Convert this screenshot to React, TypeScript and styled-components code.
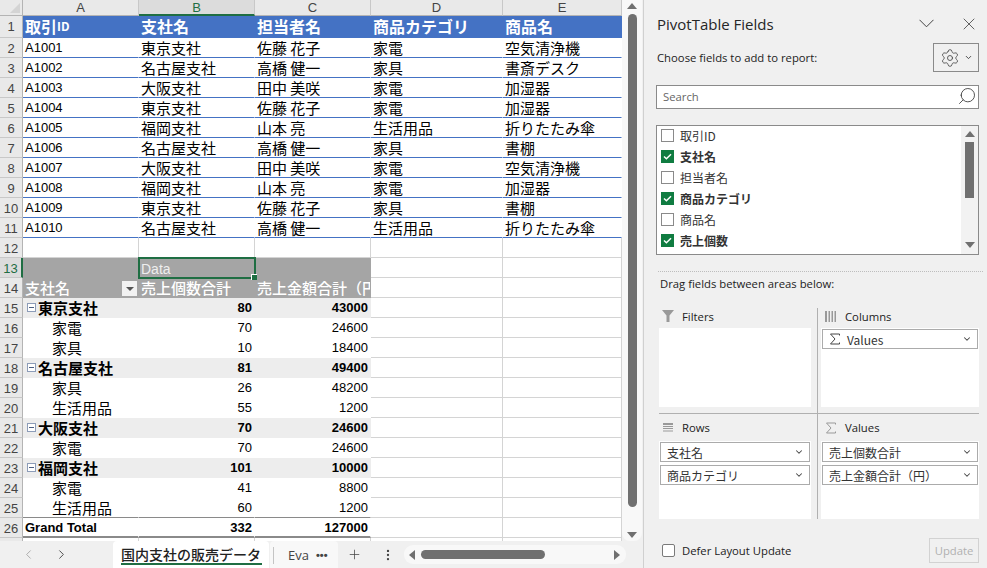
import React from "react";
import styled, { createGlobalStyle } from "styled-components";
import { ChevronDown, ChevronLeft, ChevronRight, MoreVertical, Plus, Search, Settings, X } from "lucide-react";

const CJK = `"Noto Sans CJK JP", "Liberation Sans", sans-serif`;
const LATIN = `"Liberation Sans", "Noto Sans CJK JP", sans-serif`;
const UI = `"Open Sans", "Noto Sans CJK JP", sans-serif`;

const GlobalStyle = createGlobalStyle`
  html, body {
    margin: 0;
    padding: 0;
    width: 987px;
    height: 568px;
    overflow: hidden;
    background: #f0f0f0;
  }
  * { box-sizing: border-box; }
`;

const Window = styled.div`
  display: flex;
  width: 987px;
  height: 568px;
  background: #f0f0f0;
`;

const Book = styled.div`
  width: 643px;
  display: flex;
  flex-direction: column;
`;

const SheetArea = styled.div`
  display: flex;
  height: 541px;
`;

const Grid = styled.div`
  width: 622px;
  height: 541px;
  overflow: hidden;
  background: #fff;
`;

const SheetRow = styled.div<{ $h?: number }>`
  display: grid;
  grid-template-columns: 23px 116px 116px 116px 132px 119px;
  grid-template-rows: 100%;
  height: ${({ $h }) => $h || 20}px;
`;

const Corner = styled.div`
  background: #e9e9e9;
  border-right: 1px solid #b4b4b4;
  border-bottom: 1px solid #b4b4b4;
  position: relative;
  &::after {
    content: "";
    position: absolute;
    right: 2px;
    bottom: 2px;
    border-style: solid;
    border-width: 0 0 10px 10px;
    border-color: transparent transparent #d4d4d4 transparent;
  }
`;

const ColHead = styled.div<{ $active?: boolean }>`
  background: ${({ $active }) => ($active ? "#dcdcdc" : "#e9e9e9")};
  color: ${({ $active }) => ($active ? "#1f6e43" : "#444")};
  border-right: 1px solid #c8c8c8;
  border-bottom: ${({ $active }) => ($active ? "2px solid #1f6e43" : "1px solid #b4b4b4")};
  font: 13px/15px ${LATIN};
  text-align: center;
`;

const RowHead = styled.div<{ $active?: boolean }>`
  background: ${({ $active }) => ($active ? "#dcdcdc" : "#e9e9e9")};
  color: ${({ $active }) => ($active ? "#1f6e43" : "#444")};
  border-right: ${({ $active }) => ($active ? "2px solid #1f6e43" : "1px solid #b4b4b4")};
  border-bottom: 1px solid #c8c8c8;
  font: 13px/18px ${LATIN};
  text-align: center;
  padding-top: 2px;
`;

const Cell = styled.div<{ $line?: string; $grid?: boolean; $bg?: string; $latin?: boolean; $bold?: boolean; $right?: boolean; $indent?: number; $thick?: boolean }>`
  position: relative;
  height: 100%;
  min-width: 0;
  overflow: hidden;
  white-space: nowrap;
  display: flex;
  align-items: center;
  justify-content: ${({ $right }) => ($right ? "flex-end" : "flex-start")};
  padding: ${({ $latin, $thick }) => ($latin ? ($thick ? 2 : 1) : 0)}px 2px 0 ${({ $indent }) => $indent || 2}px;
  background: ${({ $bg }) => $bg || "#fff"};
  color: #000;
  border-right: 1px solid ${({ $grid }) => ($grid ? "#d4d4d4" : "transparent")};
  border-bottom: ${({ $thick }) => ($thick ? 2 : 1)}px solid ${({ $line, $grid }) => $line || ($grid ? "#d4d4d4" : "transparent")};
  font-family: ${({ $latin }) => ($latin ? LATIN : CJK)};
  font-size: ${({ $latin }) => ($latin ? 13 : 15)}px;
  line-height: 18px;
  font-weight: ${({ $bold }) => ($bold ? 700 : 400)};
`;

const BlueHead = styled(Cell)`
  overflow: visible;
  background: #4472c4;
  color: #fff;
  font-size: 16px;
  font-weight: 700;
  padding-bottom: 2px;
  border-bottom-color: #4472c4;
  small {
    font-size: 12px;
  }
`;

const PivotHead = styled(Cell)`
  background: #a5a5a5;
  color: #fff;
  font-weight: 500;
`;

const Selected = styled(PivotHead)`
  overflow: visible;
  outline: 2px solid #1f6e43;
  outline-offset: -1px;
  box-shadow: inset 0 0 0 1px #fff;
  border: none;
  padding-top: 2px;
  font-size: 14px;
  font-weight: 400;
  color: #eee;
  font-family: ${LATIN};
  z-index: 1;
`;

const Handle = styled.span`
  position: absolute;
  right: -2px;
  bottom: -2px;
  width: 6px;
  height: 6px;
  background: #1f6e43;
  border-left: 1px solid #fff;
  border-top: 1px solid #fff;
`;

const FilterButton = styled.span`
  position: absolute;
  right: 1px;
  bottom: 1px;
  width: 15px;
  height: 15px;
  background: #f2f2f2;
  display: flex;
  align-items: center;
  justify-content: center;
  &::after {
    content: "";
    border-style: solid;
    border-width: 4px 4px 0 4px;
    border-color: #555 transparent transparent transparent;
  }
`;

const Minus = styled.span`
  width: 9px;
  height: 9px;
  margin-right: 2px;
  border: 1px solid #8c9cb8;
  background: #fff;
  display: flex;
  align-items: center;
  justify-content: center;
  &::after {
    content: "";
    width: 5px;
    height: 1px;
    background: #4a5d80;
  }
`;

const VScroll = styled.div`
  width: 20px;
  height: 541px;
  display: flex;
  flex-direction: column;
  align-items: center;
  background: #f8f8f8;
  border-radius: 0 0 8px 8px;
`;

const VThumb = styled.div`
  width: 9px;
  height: 493px;
  margin: 3px 0 auto;
  background: #707070;
  border-radius: 5px;
`;

const Arrow = styled.span<{ $dir: "up" | "down" | "left" | "right"; $color?: string }>`
  width: 0;
  height: 0;
  flex: none;
  border-style: solid;
  border-color: transparent;
  border-width: ${({ $dir }) =>
    $dir === "up" ? "0 5px 6px 5px" : $dir === "down" ? "6px 5px 0 5px" : $dir === "left" ? "5px 6px 5px 0" : "5px 0 5px 6px"};
  ${({ $dir, $color }) => {
    const c = $color || "#707070";
    return $dir === "up"
      ? `border-bottom-color: ${c};`
      : $dir === "down"
      ? `border-top-color: ${c};`
      : $dir === "left"
      ? `border-right-color: ${c};`
      : `border-left-color: ${c};`;
  }}
`;

const UpArrow = styled(Arrow)`
  margin-top: 3px;
  margin-bottom: 2px;
`;

const DownArrow = styled(Arrow)`
  margin-bottom: 3px;
`;

const ListUpArrow = styled(Arrow)`
  margin-top: 5px;
  margin-bottom: 2px;
`;

const ListDownArrow = styled(Arrow)`
  margin-bottom: 6px;
`;

const TabBar = styled.div`
  height: 27px;
  display: flex;
  align-items: center;
  background: #f0f0f0;
`;

const NavButton = styled.span<{ $dim?: boolean }>`
  width: 33px;
  display: flex;
  justify-content: center;
  color: ${({ $dim }) => ($dim ? "#a8a8a8" : "#444")};
`;

const Nav = styled.div`
  display: flex;
  width: 113px;
  padding-left: 12px;
`;

const ActiveTab = styled.div`
  width: 156px;
  height: 27px;
  padding: 4px 8px 0;
  background: #fff;
  border-radius: 4px 4px 0 0;
  font: 500 14px/19px ${CJK};
  color: #222;
  white-space: nowrap;
  position: relative;
  &::after {
    content: "";
    position: absolute;
    left: 8px;
    right: 7px;
    bottom: 3px;
    height: 2px;
    background: #1f6e43;
  }
`;

const OtherTab = styled.div`
  width: 68px;
  height: 27px;
  margin-left: 1px;
  padding-left: 18px;
  display: flex;
  align-items: center;
  background: #f8f8f8;
  border-radius: 4px 4px 0 0;
  font: 13px ${UI};
  color: #444;
  position: relative;
  &::before {
    content: "";
    position: absolute;
    left: 3px;
    top: 6px;
    bottom: 4px;
    width: 1px;
    background: #c4c4c4;
  }
  b {
    margin-left: 7px;
    font: 700 11px/8px ${LATIN};
  }
`;

const TabTool = styled.span`
  width: 33px;
  display: flex;
  justify-content: center;
  color: #444;
`;

const HScroll = styled.div`
  width: 222px;
  height: 19px;
  padding: 0 6px 0 5px;
  display: flex;
  align-items: center;
  background: #f8f8f8;
  border-radius: 9px;
`;

const HThumb = styled.div`
  width: 124px;
  height: 9px;
  margin: 0 auto 0 6px;
  background: #707070;
  border-radius: 5px;
`;

const Panel = styled.aside`
  width: 344px;
  height: 568px;
  border-left: 1px solid #d0d0d0;
  padding: 0 8px 0 12px;
  background: #f0f0f0;
  font-family: ${UI};
  color: #222;
  display: flex;
  flex-direction: column;
`;

const TitleBar = styled.div`
  height: 43px;
  padding: 4px 0 0 1px;
  display: flex;
  align-items: center;
  h1 {
    flex: 1;
    margin: 0;
    font-size: 15px;
    font-weight: 400;
    color: #262626;
  }
`;

const TitleIcon = styled.span<{ $gap?: number }>`
  display: flex;
  margin-right: ${({ $gap }) => $gap || 0}px;
  color: #444;
`;

const ChooseRow = styled.div`
  height: 29px;
  padding-left: 1px;
  display: flex;
  align-items: center;
  justify-content: space-between;
  font-size: 11.3px;
`;

const GearButton = styled.div`
  width: 46px;
  height: 29px;
  border: 1px solid #8a8a8a;
  background: #f0f0f0;
  display: flex;
  align-items: center;
  justify-content: center;
  gap: 4px;
  color: #444;
`;

const SearchBox = styled.div`
  height: 24px;
  margin-top: 13px;
  padding: 0 1px 2px 6px;
  border: 1px solid #8a8a8a;
  background: #fff;
  display: flex;
  align-items: center;
  justify-content: space-between;
  font-size: 11.3px;
  color: #666;
`;

const FieldList = styled.div`
  height: 130px;
  margin-top: 16px;
  border: 1px solid #8a8a8a;
  background: #fff;
  display: flex;
`;

const FieldRows = styled.div`
  flex: 1;
`;

const FieldRow = styled.div<{ $on?: boolean }>`
  height: 21px;
  padding: 0 0 2px 4px;
  display: flex;
  align-items: center;
  gap: 6px;
  font: ${({ $on }) => ($on ? 700 : 400)} 12px ${CJK};
  color: #333;
`;

const Box = styled.span<{ $on?: boolean }>`
  width: 13px;
  height: 13px;
  border: 1px solid ${({ $on }) => ($on ? "#107c41" : "#8a8a8a")};
  background: ${({ $on }) => ($on ? "#107c41" : "#fff")};
  display: flex;
  align-items: center;
  justify-content: center;
`;

const ListScroll = styled.div`
  width: 17px;
  background: #f2f2f2;
  display: flex;
  flex-direction: column;
  align-items: center;
`;

const ListThumb = styled.div`
  width: 9px;
  height: 56px;
  margin: 3px 0 auto;
  background: #707070;
`;

const DottedLine = styled.div`
  height: 1px;
  margin: 16px -4px 0 2px;
  border-top: 1px dotted #bdbdbd;
`;

const DragLabel = styled.div`
  margin: 4px 0 0 4px;
  font-size: 11.3px;
  line-height: 16px;
`;

const Areas = styled.div`
  margin: 16px 0 0 3px;
  width: 320px;
  display: grid;
  grid-template-columns: 159px 161px;
  grid-template-rows: 106px 105px;
`;

const Area = styled.div<{ $top?: boolean; $left?: boolean }>`
  display: flex;
  flex-direction: column;
  padding-left: ${({ $left }) => ($left ? 0 : 3)}px;
  padding-right: ${({ $left }) => ($left ? 6 : 0)}px;
  border-right: ${({ $left }) => ($left ? "1px solid #b0b0b0" : "none")};
  border-bottom: ${({ $top }) => ($top ? "1px solid #b0b0b0" : "none")};
  padding-bottom: ${({ $top }) => ($top ? 6 : 0)}px;
`;

const AreaHead = styled.div<{ $top?: boolean; $inset?: number }>`
  height: ${({ $top }) => ($top ? 20 : 27)}px;
  padding: 0 0 ${({ $top }) => ($top ? 4 : 0)}px ${({ $inset }) => $inset || 3}px;
  display: flex;
  align-items: center;
  gap: 8px;
  font-size: 11.3px;
  svg {
    flex: none;
  }
`;

const AreaBody = styled.div`
  flex: 1;
  background: #fff;
  padding: 1px 1px 0;
  display: flex;
  flex-direction: column;
  gap: 3px;
`;

const Chip = styled.div`
  height: 20px;
  padding: 0 5px 0 6px;
  border: 1px solid #ababab;
  background: #fff;
  display: flex;
  align-items: center;
  justify-content: space-between;
  font: 12px ${CJK};
  color: #333;
  span {
    display: flex;
    align-items: center;
    gap: 6px;
  }
`;

const Footer = styled.div`
  margin: 19px 0 0 6px;
  display: flex;
  align-items: center;
  font-size: 11.3px;
`;

const DeferBox = styled.span`
  width: 13px;
  height: 13px;
  margin-right: 7px;
  border: 1px solid #7a7a7a;
  border-radius: 2px;
  background: #fff;
`;

const UpdateButton = styled.div`
  width: 50px;
  height: 25px;
  margin-left: auto;
  border: 1px solid #d2d2d2;
  color: #b0b0b0;
  display: flex;
  align-items: center;
  justify-content: center;
`;

const MirroredSearch = styled(Search)`
  transform: scaleX(-1);
`;

const tableRows = [
  ["A1001", "東京支社", "佐藤 花子", "家電", "空気清浄機"],
  ["A1002", "名古屋支社", "高橋 健一", "家具", "書斎デスク"],
  ["A1003", "大阪支社", "田中 美咲", "家電", "加湿器"],
  ["A1004", "東京支社", "佐藤 花子", "家電", "加湿器"],
  ["A1005", "福岡支社", "山本 亮", "生活用品", "折りたたみ傘"],
  ["A1006", "名古屋支社", "高橋 健一", "家具", "書棚"],
  ["A1007", "大阪支社", "田中 美咲", "家電", "空気清浄機"],
  ["A1008", "福岡支社", "山本 亮", "家電", "加湿器"],
  ["A1009", "東京支社", "佐藤 花子", "家具", "書棚"],
  ["A1010", "名古屋支社", "高橋 健一", "生活用品", "折りたたみ傘"],
];

const pivotRows: [string, number, number, boolean][] = [
  ["東京支社", 80, 43000, true],
  ["家電", 70, 24600, false],
  ["家具", 10, 18400, false],
  ["名古屋支社", 81, 49400, true],
  ["家具", 26, 48200, false],
  ["生活用品", 55, 1200, false],
  ["大阪支社", 70, 24600, true],
  ["家電", 70, 24600, false],
  ["福岡支社", 101, 10000, true],
  ["家電", 41, 8800, false],
  ["生活用品", 60, 1200, false],
];

const fields: [string, boolean][] = [
  ["取引ID", false],
  ["支社名", true],
  ["担当者名", false],
  ["商品カテゴリ", true],
  ["商品名", false],
  ["売上個数", true],
];

const Blank = () => (
  <>
    <Cell $grid />
    <Cell $grid />
  </>
);

const Check = () => (
  <svg width="9" height="7" viewBox="0 0 9 7" fill="none">
    <path d="M1 3.5 L3.4 5.8 L8 1.2" stroke="#fff" strokeWidth="1.5" />
  </svg>
);

const Funnel = () => (
  <svg width="12" height="12" viewBox="0 0 12 12">
    <path d="M0 0 H12 L7.5 5.5 V12 H4.5 V5.5 Z" fill="#999" />
  </svg>
);

const ColumnsIcon = () => (
  <svg width="12" height="11" viewBox="0 0 12 11">
    <path d="M0 0 H2 V11 H0 Z M3.5 0 H5 V11 H3.5 Z M6.5 0 H8 V11 H6.5 Z M9.5 0 H11 V11 H9.5 Z" fill="#999" />
  </svg>
);

const RowsIcon = () => (
  <svg width="12" height="10" viewBox="0 0 12 10">
    <path d="M1 0 H11 V2 H1 Z M1 3 H11 V4 H1 Z M1 5 H11 V6 H1 Z M1 7.5 H11 V8.5 H1 Z" fill="#999" />
  </svg>
);

const SigmaIcon = ({ color = "#999" }: { color?: string }) => (
  <svg width="12" height="12" viewBox="0 0 12 12" fill="none">
    <path d="M10.5 2.5 V1 H1.5 L6 6 L1.5 11 H10.5 V9.5" stroke={color} strokeWidth="1" />
  </svg>
);

const PaneChevron = () => (
  <svg width="15" height="9" viewBox="0 0 15 9" fill="none">
    <path d="M0.5 0.8 L7.5 7.8 L14.5 0.8" stroke="#444" strokeWidth="1" />
  </svg>
);

const AreaChip = ({ label, sigma }: { label: string; sigma?: boolean }) => (
  <Chip>
    <span>
      {sigma && <SigmaIcon color="#444" />}
      {label}
    </span>
    <ChevronDown size={10} strokeWidth={2.5} color="#444" />
  </Chip>
);

const App = () => {
  return (
    <Window>
      <GlobalStyle />
      <Book>
        <SheetArea>
          <Grid>
            <SheetRow $h={16}>
              <Corner />
              <ColHead>A</ColHead>
              <ColHead $active>B</ColHead>
              <ColHead>C</ColHead>
              <ColHead>D</ColHead>
              <ColHead>E</ColHead>
            </SheetRow>
            <SheetRow $h={22}>
              <RowHead>1</RowHead>
              <BlueHead>
                取引<small>ID</small>
              </BlueHead>
              <BlueHead>支社名</BlueHead>
              <BlueHead>担当者名</BlueHead>
              <BlueHead>商品カテゴリ</BlueHead>
              <BlueHead>商品名</BlueHead>
            </SheetRow>
            {tableRows.map((row, i) => (
              <SheetRow key={row[0]}>
                <RowHead>{i + 2}</RowHead>
                {row.map((text, c) => (
                  <Cell key={c} $latin={c === 0} $line="#4472c4">
                    {text}
                  </Cell>
                ))}
              </SheetRow>
            ))}
            <SheetRow>
              <RowHead>12</RowHead>
              <Cell $grid />
              <Cell $grid />
              <Cell $grid />
              <Blank />
            </SheetRow>
            <SheetRow>
              <RowHead $active>13</RowHead>
              <PivotHead />
              <Selected>
                Data
                <Handle />
              </Selected>
              <PivotHead />
              <Blank />
            </SheetRow>
            <SheetRow>
              <RowHead>14</RowHead>
              <PivotHead>
                支社名
                <FilterButton />
              </PivotHead>
              <PivotHead>売上個数合計</PivotHead>
              <PivotHead>売上金額合計（円）</PivotHead>
              <Blank />
            </SheetRow>
            {pivotRows.map(([name, qty, amount, head], i) => {
              const bg = head ? "#ededed" : "#fff";
              const last = i === pivotRows.length - 1 ? "#8a8a8a" : undefined;
              return (
                <SheetRow key={i}>
                  <RowHead>{i + 15}</RowHead>
                  <Cell $bg={bg} $bold={head} $indent={head ? 4 : 29} $line={last}>
                    {head && <Minus />}
                    {name}
                  </Cell>
                  <Cell $bg={bg} $bold={head} $latin $right $line={last}>
                    {qty}
                  </Cell>
                  <Cell $bg={bg} $bold={head} $latin $right $line={last}>
                    {amount}
                  </Cell>
                  <Blank />
                </SheetRow>
              );
            })}
            <SheetRow>
              <RowHead>26</RowHead>
              <Cell $bold $latin $line="#8a8a8a" $thick>
                Grand Total
              </Cell>
              <Cell $bold $latin $right $line="#8a8a8a" $thick>
                332
              </Cell>
              <Cell $bold $latin $right $line="#8a8a8a" $thick>
                127000
              </Cell>
              <Blank />
            </SheetRow>
            <SheetRow>
              <RowHead />
              <Cell $grid />
              <Cell $grid />
              <Cell $grid />
              <Blank />
            </SheetRow>
          </Grid>
          <VScroll>
            <UpArrow $dir="up" />
            <VThumb />
            <DownArrow $dir="down" />
          </VScroll>
        </SheetArea>
        <TabBar>
          <Nav>
            <NavButton $dim>
              <ChevronLeft size={15} strokeWidth={1.5} />
            </NavButton>
            <NavButton>
              <ChevronRight size={15} strokeWidth={1.5} />
            </NavButton>
          </Nav>
          <ActiveTab>国内支社の販売データ</ActiveTab>
          <OtherTab>
            Eva<b>•••</b>
          </OtherTab>
          <TabTool>
            <Plus size={15} strokeWidth={1.2} />
          </TabTool>
          <TabTool>
            <MoreVertical size={14} strokeWidth={2} />
          </TabTool>
          <HScroll>
            <Arrow $dir="left" />
            <HThumb />
            <Arrow $dir="right" />
          </HScroll>
        </TabBar>
      </Book>
      <Panel>
        <TitleBar>
          <h1>PivotTable Fields</h1>
          <TitleIcon $gap={25}>
            <PaneChevron />
          </TitleIcon>
          <TitleIcon $gap={0}>
            <X size={20} strokeWidth={1} />
          </TitleIcon>
        </TitleBar>
        <ChooseRow>
          Choose fields to add to report:
          <GearButton>
            <Settings size={20} strokeWidth={1} />
            <ChevronDown size={9} strokeWidth={2.5} />
          </GearButton>
        </ChooseRow>
        <SearchBox>
          Search
          <MirroredSearch size={20} strokeWidth={1} color="#333" />
        </SearchBox>
        <FieldList>
          <FieldRows>
            {fields.map(([name, on]) => (
              <FieldRow key={name} $on={on}>
                <Box $on={on}>{on && <Check />}</Box>
                {name}
              </FieldRow>
            ))}
          </FieldRows>
          <ListScroll>
            <ListUpArrow $dir="up" />
            <ListThumb />
            <ListDownArrow $dir="down" />
          </ListScroll>
        </FieldList>
        <DottedLine />
        <DragLabel>Drag fields between areas below:</DragLabel>
        <Areas>
          <Area $top $left>
            <AreaHead $top>
              <Funnel />
              Filters
            </AreaHead>
            <AreaBody />
          </Area>
          <Area $top>
            <AreaHead $top $inset={4}>
              <ColumnsIcon />
              Columns
            </AreaHead>
            <AreaBody>
              <AreaChip label="Values" sigma />
            </AreaBody>
          </Area>
          <Area $left>
            <AreaHead>
              <RowsIcon />
              Rows
            </AreaHead>
            <AreaBody>
              <AreaChip label="支社名" />
              <AreaChip label="商品カテゴリ" />
            </AreaBody>
          </Area>
          <Area>
            <AreaHead $inset={4}>
              <SigmaIcon />
              Values
            </AreaHead>
            <AreaBody>
              <AreaChip label="売上個数合計" />
              <AreaChip label="売上金額合計（円）" />
            </AreaBody>
          </Area>
        </Areas>
        <Footer>
          <DeferBox />
          Defer Layout Update
          <UpdateButton>Update</UpdateButton>
        </Footer>
      </Panel>
    </Window>
  );
};

export default App;
